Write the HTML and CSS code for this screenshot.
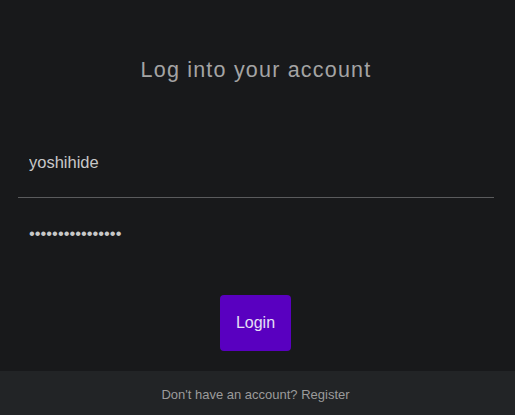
FILE: index.html
```html
<!DOCTYPE html>
<html>
<head>
<meta charset="utf-8">
<link rel="stylesheet" href="styles.css">
</head>
<body>
<div class="page">
  <main class="main">
    <h1 class="title">Log into your account</h1>
    <form class="form">
      <input class="field field-user" type="text" value="yoshihide">
      <input class="field" type="password" value="abcdefghijklmnop">
      <div class="actions">
        <button class="btn" type="button">Login</button>
      </div>
    </form>
  </main>
  <footer class="footer">Don't have an account? Register</footer>
</div>
</body>
</html>
```
FILE: styles.css
```css
html, body {
  margin: 0;
  padding: 0;
  background: #18191b;
  font-family: "Liberation Sans", Arial, sans-serif;
}
.page {
  width: 515px;
  height: 415px;
  display: flex;
  flex-direction: column;
}
.main {
  flex: 1;
  padding: 58px 21px 0 18px;
}
.title {
  margin: 0 0 45px;
  font-size: 21.5px;
  line-height: 24px;
  font-weight: normal;
  letter-spacing: 1.2px;
  text-align: center;
  color: #a4a4a4;
}
.form {
  display: flex;
  flex-direction: column;
}
.field {
  display: block;
  box-sizing: border-box;
  width: 100%;
  height: 70px;
  margin: 0;
  padding: 0 11px;
  border: none;
  outline: none;
  background: transparent;
  color: #c8c8c8;
  font-family: "Liberation Sans", Arial, sans-serif;
  font-size: 16.5px;
}
.field-user {
  height: 71px;
  border-bottom: 1px solid #5a5b5d;
}
.actions {
  display: flex;
  justify-content: center;
  margin-top: 27px;
  padding-right: 1px;
}
.btn {
  width: 71px;
  height: 56px;
  border: none;
  border-radius: 4px;
  background: #5900c0;
  color: #e6e0f5;
  font-family: "Liberation Sans", Arial, sans-serif;
  font-size: 16px;
  padding: 0;
}
.footer {
  box-sizing: border-box;
  height: 44px;
  padding: 3px 4px 0 0;
  background: #222426;
  color: #9b9b9b;
  font-size: 13px;
  display: flex;
  align-items: center;
  justify-content: center;
}
```
